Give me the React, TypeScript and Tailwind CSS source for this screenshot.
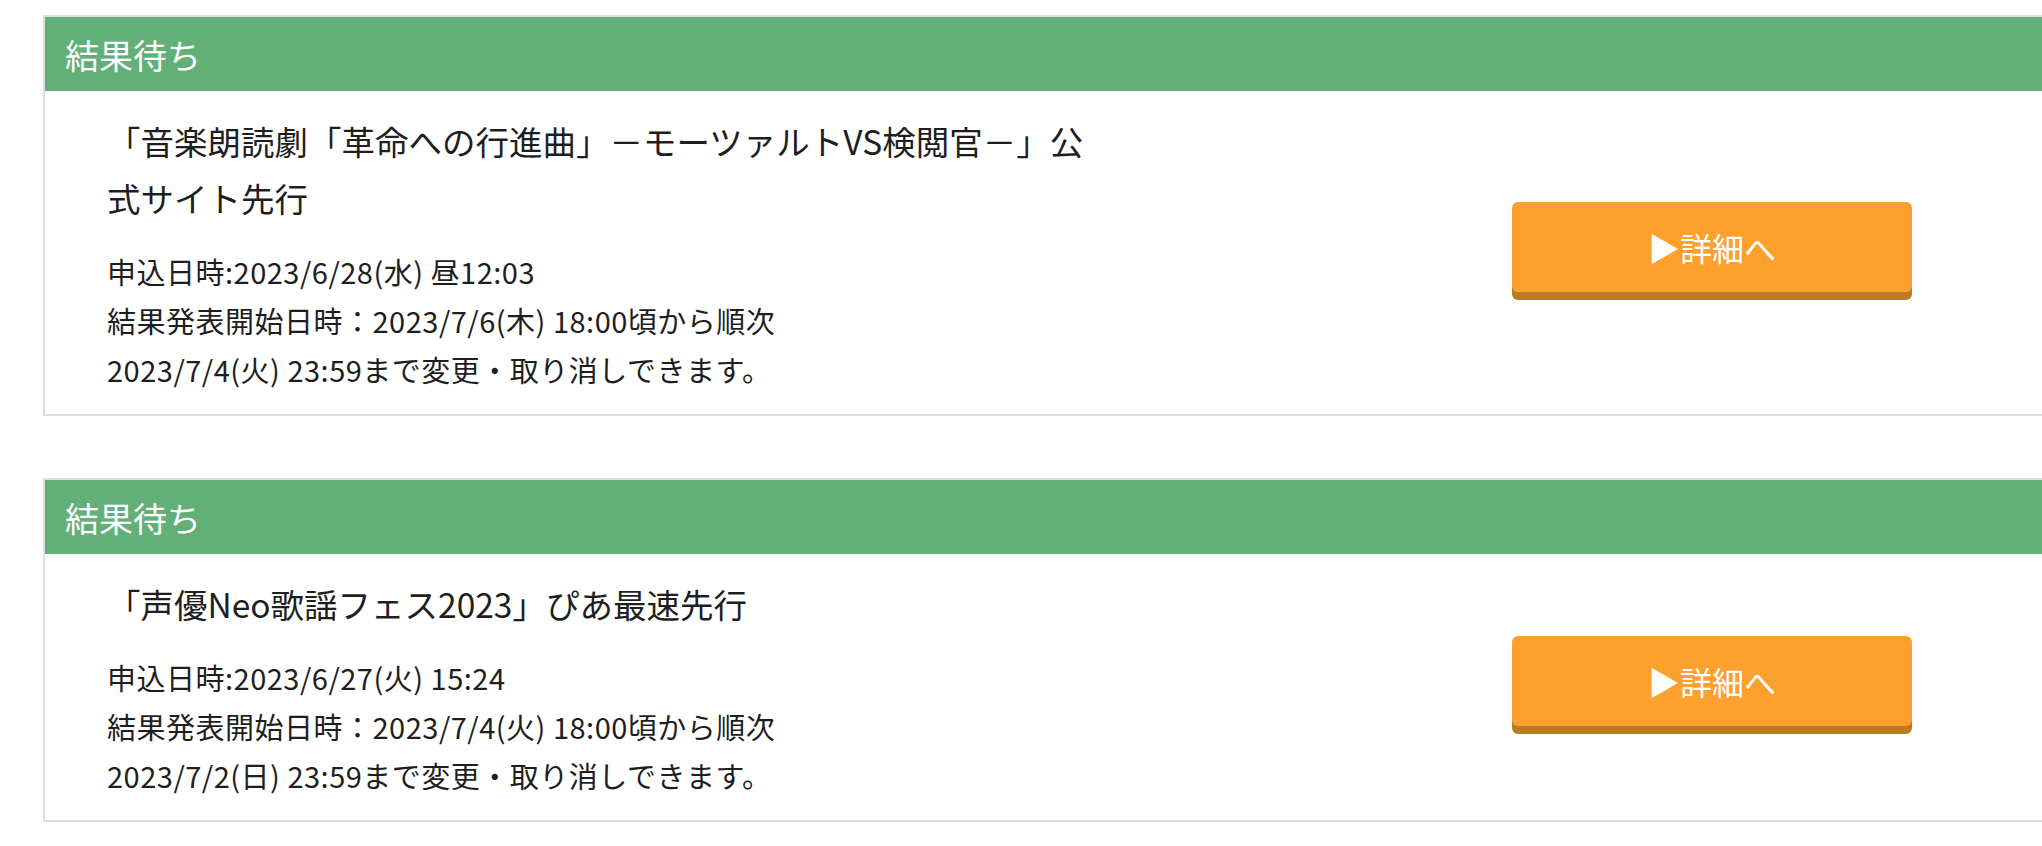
type Entry = {
  title: string;
  lines: string[];
};

const entries: Entry[] = [
  {
    title: "「音楽朗読劇「革命への行進曲」－モーツァルトVS検閲官－」公式サイト先行",
    lines: [
      "申込日時:2023/6/28(水) 昼12:03",
      "結果発表開始日時：2023/7/6(木) 18:00頃から順次",
      "2023/7/4(火) 23:59まで変更・取り消しできます。",
    ],
  },
  {
    title: "「声優Neo歌謡フェス2023」ぴあ最速先行",
    lines: [
      "申込日時:2023/6/27(火) 15:24",
      "結果発表開始日時：2023/7/4(火) 18:00頃から順次",
      "2023/7/2(日) 23:59まで変更・取り消しできます。",
    ],
  },
];

function EntryCard({ entry }: { entry: Entry }) {
  return (
    <article className="border-2 border-r-0 border-[#dddddd] bg-white">
      <header className="flex h-[74px] items-center bg-[#62b077] px-[20px] text-[34px] text-white">
        結果待ち
      </header>
      <div className="flex items-center pb-[20px] pl-[62px] pt-[21px]">
        <div className="w-[985px] text-[#1e1e1e]">
          <p className="text-[33.5px] leading-[57px]">{entry.title}</p>
          <div className="mt-[21px] text-[29px] leading-[49px] tracking-[0.5px]">
            {entry.lines.map((line) => (
              <p key={line}>{line}</p>
            ))}
          </div>
        </div>
        <button
          type="button"
          className="mb-[13px] ml-[420px] flex h-[90px] w-[400px] items-center justify-center rounded-[6px] bg-[#fda02e] text-[32px] text-white shadow-[0_8px_0_#bb7b24]"
        >
          ▶詳細へ
        </button>
      </div>
    </article>
  );
}

export default function App() {
  return (
    <main
      className="min-h-screen overflow-hidden bg-white"
      style={{ fontFamily: '"Noto Sans CJK JP", "Noto Sans", sans-serif' }}
    >
      <div className="flex flex-col gap-[62px] pl-[43px] pt-[15px]">
        {entries.map((entry) => (
          <EntryCard key={entry.title} entry={entry} />
        ))}
      </div>
    </main>
  );
}
